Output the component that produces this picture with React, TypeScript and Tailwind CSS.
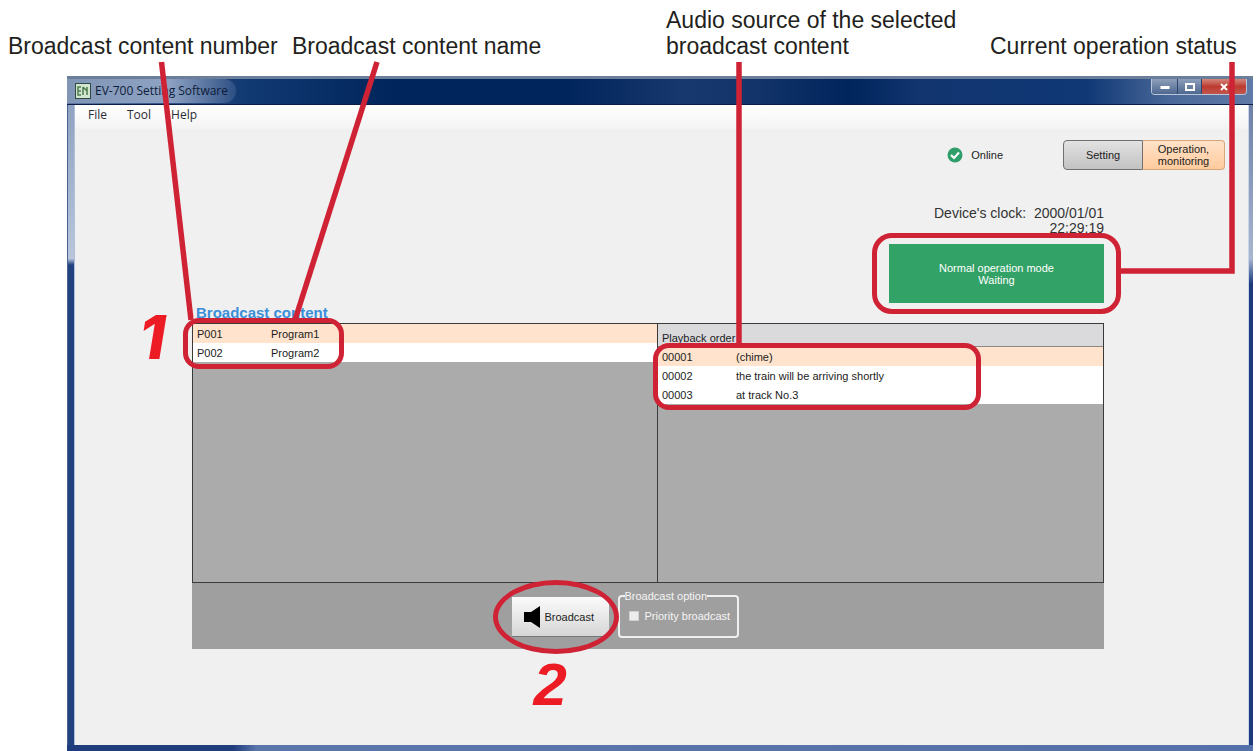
import React, { useState } from 'react';

interface IItem {
  id: string;
  name: string;
}

const programs: IItem[] = [
  { id: 'P001', name: 'Program1' },
  { id: 'P002', name: 'Program2' },
];

const playback: IItem[] = [
  { id: '00001', name: '(chime)' },
  { id: '00002', name: 'the train will be arriving shortly' },
  { id: '00003', name: 'at track No.3' },
];

const captionClass = 'whitespace-nowrap text-[23px] leading-[26px] text-[#231f20]';
const ringClass = 'pointer-events-none absolute z-10 border-[5px] border-[#cf2335]';
const stepClass = 'pointer-events-none absolute text-[60px] leading-[70px] text-[#ed1c24] italic';

const Captions: React.FC = () => (
  <header className="grid h-[76px] grid-cols-[284fr_374fr_324fr_262fr] items-end px-2 pb-[17px]">
    <p className={captionClass}>Broadcast content number</p>
    <p className={captionClass}>Broadcast content name</p>
    <p className={captionClass}>
      Audio source of the selected
      <br />
      broadcast content
    </p>
    <p className={captionClass}>Current operation status</p>
  </header>
);

// Leader lines from the captions down to the rings
const Leaders: React.FC = () => (
  <svg
    className="pointer-events-none absolute inset-0 z-20 h-full w-full"
    viewBox="0 0 1260 751"
    preserveAspectRatio="none"
    fill="none"
    stroke="#cf2335"
    strokeWidth="5.5"
    aria-hidden="true"
  >
    <path d="M161.500 62L191 320" />
    <path d="M377 62L295 320" />
    <path d="M739 62V346" />
    <path d="M1232 62V271H1117" />
  </svg>
);

const TitleBar: React.FC = () => (
  <div className="flex h-[29px] items-start justify-between border-t-3 border-b border-t-[#6b7f9b] border-b-[#0b1d48] bg-[linear-gradient(to_right,#5f7aa6_0%,#123a72_15%,#00245c_28%,#00245c_42%,#17386e_52%,#12346a_58%,#00245c_66%,#12356f_72%,#0f3875_86%,#4a6899_93%,#5f7aa6_100%)]">
    <div className="flex h-6 items-center gap-1 rounded-r-full bg-linear-to-r from-[#8195b5] via-[#8ea2c3] via-60% to-[#3c5a8c]/60 pr-2 pl-2">
      <svg className="h-4 w-4" viewBox="0 0 16 16" aria-hidden="true">
        <rect x="0.500" y="0.500" width="15" height="15" fill="#d3e6cf" stroke="#2f4a45" />
        <path d="M6 4H3v8h3M3 8h3M8 4v8M8 4l4 4v4M12 4v4" fill="none" stroke="#4e7d50" strokeWidth="1.500" />
      </svg>
      <h1 className="font-['Open_Sans',sans-serif] text-[12px] leading-4 text-[#0d1c38]">EV-700 Setting Software</h1>
    </div>
    <div className="mr-[6px] flex h-4 overflow-hidden rounded-b-sm border border-t-0 border-[#b9c6da]">
      <button aria-label="Minimize" className="flex w-[26px] items-center justify-center border-r border-[#2d456f] bg-linear-to-b from-[#8d9fba] to-[#4f6890]">
        <svg className="h-3 w-3" viewBox="0 0 12 12"><rect x="1.500" y="5" width="9" height="3" fill="#fff" /></svg>
      </button>
      <button aria-label="Maximize" className="flex w-6 items-center justify-center border-r border-[#2d456f] bg-linear-to-b from-[#8d9fba] to-[#4f6890]">
        <svg className="h-3 w-3" viewBox="0 0 12 12"><rect x="2" y="3" width="8" height="6" fill="none" stroke="#fff" strokeWidth="2" /></svg>
      </button>
      <button aria-label="Close" className="flex w-[44px] items-center justify-center bg-linear-to-b from-[#d4857c] via-[#bd3a30] to-[#c2564c]">
        <svg className="h-3 w-3" viewBox="0 0 12 12"><path d="M3 3l6 6M9 3l-6 6" stroke="#fff" strokeWidth="2" /></svg>
      </button>
    </div>
  </div>
);

const MenuBar: React.FC = () => (
  <nav className="flex h-6 items-center gap-5 bg-linear-to-b from-white to-[#f3f3f3] pb-1 pl-[13px] font-['Open_Sans',sans-serif] text-[12px] leading-4 text-[#2b2b33]">
    <button>File</button>
    <button>Tool</button>
    <button>Help</button>
  </nav>
);

const TopRow: React.FC = () => (
  <div className="flex items-center justify-end pt-[11px] pr-[23px]">
    <div className="mr-[60px] flex items-center gap-2">
      <svg className="h-4 w-4" viewBox="0 0 16 16" aria-hidden="true">
        <circle cx="8" cy="8" r="7.500" fill="#2f9e68" />
        <path d="M4 8l3 3 5-5.500" fill="none" stroke="#fff" strokeWidth="2.200" />
      </svg>
      <span>Online</span>
    </div>
    <button className="h-[30px] w-20 rounded-l-sm border border-[#707070] bg-linear-to-b from-[#e2e2e2] to-[#c2c2c2]">
      Setting
    </button>
    <button className="h-[30px] w-[82px] rounded-r-sm border border-l-0 border-[#d9a67c] bg-linear-to-b from-[#ffe2c8] to-[#ffcb9d] leading-3">
      Operation,
      <br />
      monitoring
    </button>
  </div>
);

const Status: React.FC = () => (
  <div className="flex flex-col items-end pt-9">
    <p className="text-right text-[14px] leading-[15px] whitespace-pre text-[#333]">
      {"Device's clock:  2000/01/01\n22:29:19"}
    </p>
    <div className="relative mt-2 flex h-[59px] w-[215px] items-center justify-center bg-[#33a266] text-center leading-3 text-white">
      <p>
        Normal operation mode
        <br />
        Waiting
      </p>
      <div className={`${ringClass} -inset-x-[17px] -inset-y-[11px] rounded-[20px]`} />
    </div>
  </div>
);

interface IListProps {
  items: IItem[];
  label: string;
  selected: string;
  onSelect: (id: string) => void;
}

const ItemTable: React.FC<IListProps> = ({ items, label, selected, onSelect }) => (
  <table className="w-full table-fixed text-left" aria-label={label}>
    <colgroup>
      <col className="w-[74px]" />
      <col />
    </colgroup>
    <tbody>
      {items.map((item) => (
        <tr
          key={item.id}
          onClick={() => onSelect(item.id)}
          className={`h-[19px] ${item.id === selected ? 'bg-[#ffe3cc]' : 'bg-white'}`}
        >
          <td className="pl-1">{item.id}</td>
          <td className="pl-1">{item.name}</td>
        </tr>
      ))}
    </tbody>
  </table>
);

const Lists: React.FC = () => {
  const [program, setProgram] = useState('P001');
  const [track, setTrack] = useState('00001');

  return (
    <div className="grid h-[260px] grid-cols-[465fr_447fr] border border-[#3a3a3a] bg-[#ababab]">
      <div className="relative">
        <ItemTable items={programs} label="Broadcast content" selected={program} onSelect={setProgram} />
        <div className={`${ringClass} -top-[6px] -left-[10px] h-[51px] w-[161px] rounded-2xl`} />
        <span className={`${stepClass} -top-[22px] -left-[54px] font-['Inter',sans-serif] font-extrabold`}>1</span>
      </div>
      <div className="border-l border-[#3a3a3a]">
        <h3 className="flex h-[23px] items-end border-b border-[#8a8a8a] bg-[#dadadc] pl-1 leading-4">Playback order</h3>
        <div className="relative">
          <ItemTable items={playback} label="Playback order" selected={track} onSelect={setTrack} />
          <div className={`${ringClass} -top-1 -left-[5px] h-[67px] w-[328px] rounded-2xl`} />
        </div>
      </div>
    </div>
  );
};

const BroadcastBar: React.FC = () => (
  <div className="flex h-[66px] items-start justify-center gap-[9px] bg-[#9f9f9f] pt-[14px] pr-[46px]">
    <div className="relative">
      <button className="flex h-10 w-[97px] items-center gap-1 border-b border-[#777] bg-linear-to-b from-[#fbfbfb] to-[#d6d6d6] pl-[11px]">
        <svg className="h-[22px] w-[18px]" viewBox="0 0 18 22" aria-hidden="true">
          <path d="M1 6h7l9-6v22l-9-6H1z" fill="#000" />
        </svg>
        Broadcast
      </button>
      <div className={`${ringClass} -inset-y-[17px] -right-[10px] -left-[19px] rounded-[50%]`} />
      <span className={`${stepClass} top-[53px] left-[22px] font-bold`}>2</span>
    </div>
    <fieldset className="-mt-[9px] h-[50px] w-[121px] rounded-sm border-2 border-[#f0f0f0] pl-[9px] text-[#f4f4f4]">
      <legend className="-ml-1 leading-4 whitespace-nowrap">Broadcast option</legend>
      <label className="flex items-center gap-[6px] pt-1 leading-4 whitespace-nowrap">
        <input type="checkbox" className="h-[10px] w-[10px] appearance-none border border-[#d0d0d0] bg-[#ededed]" />
        Priority broadcast
      </label>
    </fieldset>
  </div>
);

const App: React.FC = () => {
  return (
    <div className="relative flex min-h-screen flex-col overflow-hidden bg-white font-['Liberation_Sans',Arial,sans-serif]">
      <Captions />
      <div className="mr-[7px] ml-[67px] flex flex-1 flex-col text-[11px] leading-4 text-[#1c1c1c]">
        <TitleBar />
        <div className="flex flex-1">
          <div className="w-2 border-x border-l-[#4a6390] border-r-[#aebfd9] bg-linear-to-b from-[#8fa2c0] via-[#b9c6dc] via-24% to-[#22427f] to-25%" />
          <main className="flex flex-1 flex-col bg-[#f0f0f0]">
            <MenuBar />
            <TopRow />
            <div className="pr-36 pl-[117px]">
              <Status />
              <h2 className="pl-1 text-[15px] leading-5 font-bold text-[#3a8fd9]">Broadcast content</h2>
              <Lists />
              <BroadcastBar />
            </div>
          </main>
          <div className="w-[5px] border-l border-[#c9d6ea] bg-linear-to-b from-[#6d80a6] via-[#a9b6cf] via-24% to-[#1d3a7d] to-28%" />
        </div>
        <div className="h-[6px] bg-linear-to-r from-[#1f3d7c] from-14% via-[#5b76ab] via-16% to-[#5470a8]" />
      </div>
      <Leaders />
    </div>
  );
};

export default App;
